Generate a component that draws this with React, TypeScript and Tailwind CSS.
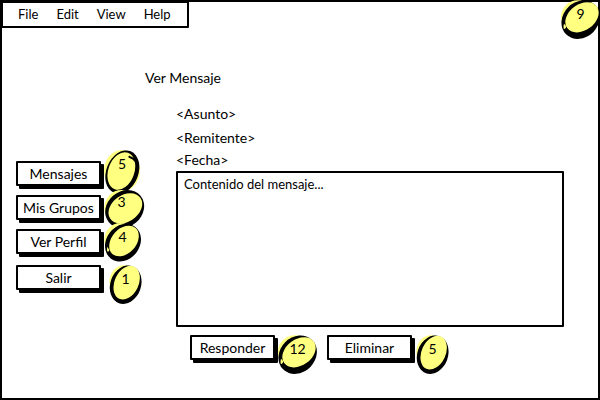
import React from "react";

type Oval = { cx: number; cy: number; rx: number; ry: number; turn: number };

type Shape = {
  box: string;
  size: string;
  glow: Oval;
  outer: Oval;
  inner: Oval;
  tick?: string;
  fleck?: string;
};

const shapes: Record<"tall" | "wide" | "round" | "drop" | "disc", Shape> = {
  tall: {
    box: "12 10 120 132",
    size: "w-10 h-11",
    glow: { cx: 66, cy: 72, rx: 54, ry: 62, turn: 0 },
    outer: { cx: 67, cy: 76, rx: 48, ry: 67, turn: 22 },
    inner: { cx: 64, cy: 73, rx: 39, ry: 58, turn: 20 },
    tick: "M86 29C94 36 98 30 106 44",
  },
  wide: {
    box: "12 12 123 114",
    size: "w-[41px] h-[38px]",
    glow: { cx: 64, cy: 66, rx: 51, ry: 54, turn: 0 },
    outer: { cx: 74, cy: 69, rx: 53, ry: 62, turn: 50 },
    inner: { cx: 76, cy: 67, rx: 40, ry: 55, turn: 55 },
  },
  round: {
    box: "12 9 111 117",
    size: "w-[37px] h-[39px]",
    glow: { cx: 61, cy: 59, rx: 48, ry: 50, turn: 0 },
    outer: { cx: 69, cy: 68, rx: 50, ry: 60, turn: 38 },
    inner: { cx: 72, cy: 63, rx: 37, ry: 52, turn: 42 },
    fleck: "M22 80C18 98 26 98 28 90Z",
  },
  drop: {
    box: "27 135 99 117",
    size: "w-[33px] h-[39px]",
    glow: { cx: 72, cy: 186, rx: 44, ry: 50, turn: 0 },
    outer: { cx: 77, cy: 194, rx: 46, ry: 59, turn: 20 },
    inner: { cx: 80, cy: 188, rx: 36, ry: 53, turn: 25 },
  },
  disc: {
    box: "12 15 117 117",
    size: "w-[39px] h-[39px]",
    glow: { cx: 62, cy: 66, rx: 50, ry: 50, turn: 0 },
    outer: { cx: 71, cy: 74, rx: 53, ry: 62, turn: 45 },
    inner: { cx: 75, cy: 67, rx: 39, ry: 55, turn: 54 },
    fleck: "M21 86C16 106 25 106 28 94Z",
  },
};

function Ellipse({ oval, fill }: { oval: Oval; fill: string }) {
  const { cx, cy, rx, ry, turn } = oval;
  return <ellipse cx={cx} cy={cy} rx={rx} ry={ry} transform={`rotate(${turn} ${cx} ${cy})`} fill={fill} />;
}

function Badge({
  shape,
  place,
  text,
  children,
}: {
  shape: keyof typeof shapes;
  place: string;
  text: string;
  children: React.ReactNode;
}) {
  const s = shapes[shape];
  return (
    <span className={`absolute ${place} ${s.size} flex justify-center ${text}`}>
      <svg viewBox={s.box} className="absolute inset-0 h-full w-full" aria-hidden="true">
        <Ellipse oval={s.glow} fill="#ffff80" />
        <Ellipse oval={s.outer} fill="#000" />
        <Ellipse oval={s.inner} fill="#ffff80" />
        {s.fleck && <path d={s.fleck} fill="#ffff80" />}
        {s.tick && <path d={s.tick} stroke="#000" strokeWidth="6" fill="none" />}
      </svg>
      <span className="relative">{children}</span>
    </span>
  );
}

function SketchButton({ children }: { children: React.ReactNode }) {
  return (
    <button
      type="button"
      className="flex h-[25px] w-[85px] items-center justify-center rounded-[1px] border-2 border-black bg-white shadow-[3px_3px_0_#000]"
    >
      {children}
    </button>
  );
}

export default function App() {
  return (
    <div className="relative flex min-h-screen flex-col border-2 border-black bg-white font-['Lato','Open_Sans',sans-serif] text-sm leading-4 text-black">
      <header className="-mt-px -ml-px flex">
        <nav
          aria-label="Menu"
          className="flex h-[27px] items-center gap-[18px] rounded-[1px] border-2 border-black bg-white pr-4 pb-[2px] pl-[15px] text-[13px]"
        >
          <button type="button">File</button>
          <button type="button">Edit</button>
          <button type="button">View</button>
          <button type="button">Help</button>
        </nav>
      </header>
      <Badge shape="disc" place="-top-[2px] -right-[2px]" text="pt-[6px]">
        9
      </Badge>

      <div className="flex flex-1 pr-[34px] pb-[38px] pl-[14px]">
        <nav aria-label="Secciones" className="flex shrink-0 flex-col gap-[9px] pt-[133px]">
          <div className="relative">
            <SketchButton>Mensajes</SketchButton>
            <Badge shape="tall" place="-top-[11px] left-[88px]" text="pt-[6px] pr-1">
              5
            </Badge>
          </div>
          <div className="relative">
            <SketchButton>Mis Grupos</SketchButton>
            <Badge shape="wide" place="-top-[5px] left-[88px]" text="pt-1 pr-[6px]">
              3
            </Badge>
          </div>
          <div className="relative">
            <SketchButton>Ver Perfil</SketchButton>
            <Badge shape="round" place="-top-[6px] left-[88px]" text="pt-[6px]">
              4
            </Badge>
          </div>
          <div className="relative mt-[2px]">
            <SketchButton>Salir</SketchButton>
            <Badge shape="drop" place="top-0 left-[93px]" text="pt-[6px]">
              1
            </Badge>
          </div>
        </nav>

        <main className="flex min-w-0 flex-1 flex-col pt-[42px] pl-11">
          <h1>Ver Mensaje</h1>
          <div className="flex flex-1 flex-col pt-5 pl-[31px]">
            <p>&lt;Asunto&gt;</p>
            <p className="pt-2">&lt;Remitente&gt;</p>
            <p className="pt-[6px]">&lt;Fecha&gt;</p>
            <textarea
              aria-label="Contenido"
              defaultValue="Contenido del mensaje..."
              className="mt-[3px] block w-full flex-1 resize-none rounded-[1px] border-2 border-black bg-white px-[6px] py-[3px] text-[13px] outline-none"
            />
            <div className="flex gap-[52px] pt-2 pl-[14px]">
              <div className="relative">
                <SketchButton>Responder</SketchButton>
                <Badge shape="disc" place="top-0 left-[88px]" text="pt-[6px]">
                  12
                </Badge>
              </div>
              <div className="relative">
                <SketchButton>Eliminar</SketchButton>
                <Badge shape="drop" place="top-0 left-[89px]" text="pt-[6px]">
                  5
                </Badge>
              </div>
            </div>
          </div>
        </main>
      </div>
    </div>
  );
}
